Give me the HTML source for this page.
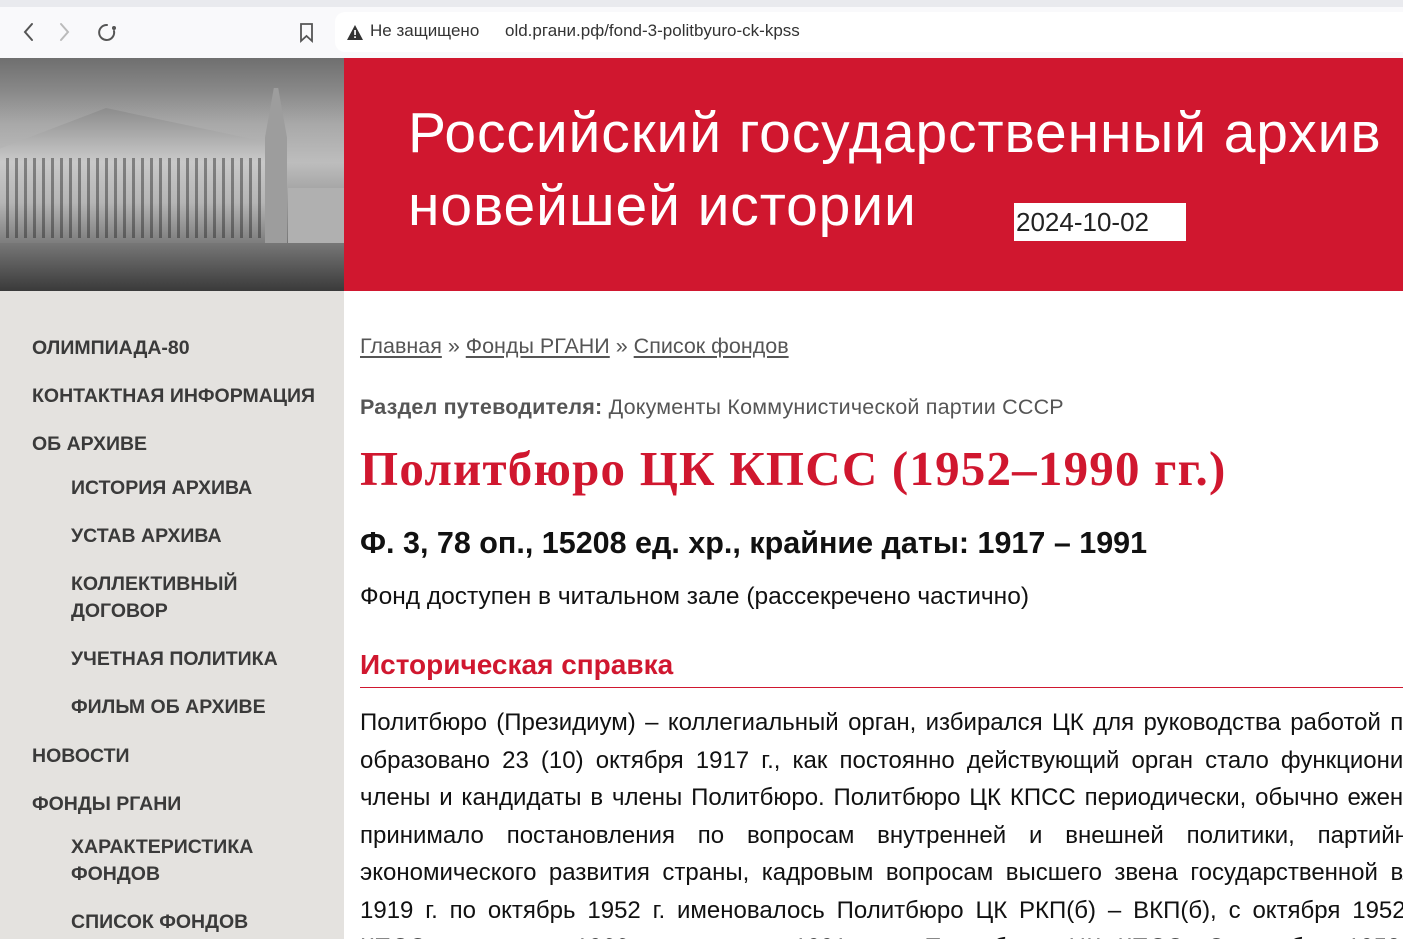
<!DOCTYPE html>
<html><head><meta charset="utf-8"><style>
*{margin:0;padding:0;box-sizing:border-box}
html,body{width:1403px;height:939px;overflow:hidden}
body{position:relative;background:#fff;font-family:"Liberation Sans",sans-serif}
.top{position:absolute;left:0;top:0;width:1403px;height:7px;background:#e9eaee}
.bar{position:absolute;left:0;top:7px;width:1403px;height:51px;background:#f9f9fb}
.addr{position:absolute;left:335px;top:12px;width:1100px;height:40px;background:#fff;border-radius:10px}
.url{position:absolute;top:21px;font-size:17px;color:#333;white-space:nowrap}
.photo{position:absolute;left:0;top:58px;width:344px;height:233px;overflow:hidden;
background:linear-gradient(180deg,#6f6f6f 0%,#8a8a8a 15%,#a8a8a8 28%,#bdbdbd 45%,#8a8a8a 70%,#7a7a7a 78%,#5b5b5b 86%,#333 100%)}
.red{position:absolute;left:344px;top:58px;width:1059px;height:233px;background:#d0172f}
.h1{position:absolute;left:408px;color:#fff;font-size:57px;white-space:nowrap;letter-spacing:0.9px}
.date{position:absolute;left:1014px;top:203px;width:172px;height:38px;background:#fff;color:#222;font-size:26px;padding-left:2px;line-height:38px}
.side{position:absolute;left:0;top:291px;width:344px;height:648px;background:#e4e2df}
.nav{position:absolute;font-weight:bold;font-size:19.5px;color:#3a3a3a;white-space:nowrap;line-height:27px}
.c{position:absolute;left:360px;white-space:nowrap}
.bc{font-size:21.5px;color:#555}
.bc u{text-decoration:underline;text-underline-offset:3px}
.body{position:absolute;left:360px;width:1070px;font-size:24px;color:#111;line-height:37.5px}
.body div{text-align:justify;text-align-last:justify;white-space:nowrap;height:37.5px}
</style></head><body>
<div class="top"></div><div class="bar"></div>
<svg style="position:absolute;left:18px;top:20px" width="110" height="24" viewBox="0 0 110 24" fill="none" stroke-width="2" stroke-linecap="round">
<path d="M14 4 L7 12 L14 20" stroke="#555"/>
<path d="M43 4 L50 12 L43 20" stroke="#bbb"/>
<path d="M89 5 A7.5 7.5 0 1 0 96 11" stroke="#555"/>
<circle cx="96" cy="8" r="2" fill="#555" stroke="none"/>
</svg>
<svg style="position:absolute;left:298px;top:22px" width="18" height="22" viewBox="0 0 18 22"><path d="M3 2 H14 V19 L8.5 14 L3 19 Z" fill="none" stroke="#555" stroke-width="1.8"/></svg>
<div class="addr"></div>
<svg style="position:absolute;left:346px;top:24px" width="18" height="17" viewBox="0 0 18 17"><path d="M9 1 L17 16 H1 Z" fill="#333"/><rect x="8.2" y="6" width="1.7" height="5" fill="#fff"/><rect x="8.2" y="12.3" width="1.7" height="1.7" fill="#fff"/></svg>
<div class="url" style="left:370px">Не защищено</div>
<div class="url" style="left:505px">old.ргани.рф/fond-3-politbyuro-ck-kpss</div>

<div class="photo">
<div style="position:absolute;left:0;top:50px;width:265px;height:135px;background:linear-gradient(180deg,#8c8c8c,#c9c9c9 40%,#b5b5b5 70%,#7d7d7d);clip-path:polygon(0 30%,40% 0,100% 25%,100% 100%,0 100%)"></div>
<div style="position:absolute;left:0;top:100px;width:265px;height:80px;background:repeating-linear-gradient(90deg,transparent 0 6px,rgba(40,40,40,.45) 6px 9px)"></div>
<div style="position:absolute;left:265px;top:30px;width:22px;height:165px;background:#9d9d9d;clip-path:polygon(40% 0,60% 0,100% 30%,100% 100%,0 100%,0 30%)"></div>
<div style="position:absolute;left:288px;top:130px;width:56px;height:60px;background:#b0b0b0"></div>
<div style="position:absolute;left:0;top:185px;width:344px;height:48px;background:linear-gradient(180deg,#777,#3a3a3a)"></div>
</div>
<div class="red"></div>
<div class="h1" style="top:100px">Российский государственный архив</div>
<div class="h1" style="top:173px">новейшей истории</div>
<div class="date">2024-10-02</div>

<div class="side"></div>
<div class="nav" style="left:32px;top:335px">ОЛИМПИАДА-80</div>
<div class="nav" style="left:32px;top:383px">КОНТАКТНАЯ ИНФОРМАЦИЯ</div>
<div class="nav" style="left:32px;top:431px">ОБ АРХИВЕ</div>
<div class="nav" style="left:71px;top:475px">ИСТОРИЯ АРХИВА</div>
<div class="nav" style="left:71px;top:523px">УСТАВ АРХИВА</div>
<div class="nav" style="left:71px;top:571px">КОЛЛЕКТИВНЫЙ<br>ДОГОВОР</div>
<div class="nav" style="left:71px;top:646px">УЧЕТНАЯ ПОЛИТИКА</div>
<div class="nav" style="left:71px;top:694px">ФИЛЬМ ОБ АРХИВЕ</div>
<div class="nav" style="left:32px;top:743px">НОВОСТИ</div>
<div class="nav" style="left:32px;top:791px">ФОНДЫ РГАНИ</div>
<div class="nav" style="left:71px;top:834px">ХАРАКТЕРИСТИКА<br>ФОНДОВ</div>
<div class="nav" style="left:71px;top:909px">СПИСОК ФОНДОВ</div>

<div class="c bc" style="top:334px"><u>Главная</u> » <u>Фонды РГАНИ</u> » <u>Список фондов</u></div>
<div class="c" style="top:395px;font-size:21.5px;letter-spacing:0.2px;color:#555"><b>Раздел путеводителя:</b> Документы Коммунистической партии СССР</div>
<div class="c" style="top:440px;font-family:'Liberation Serif',serif;font-weight:bold;font-size:49px;letter-spacing:1.2px;color:#d0172f">Политбюро ЦК КПСС (1952–1990 гг.)</div>
<div class="c" style="top:526px;font-size:30.5px;font-weight:bold;color:#111">Ф. 3, 78 оп., 15208 ед. хр., крайние даты: 1917 – 1991</div>
<div class="c" style="top:583px;font-size:24.5px;color:#111">Фонд доступен в читальном зале (рассекречено частично)</div>
<div class="c" style="top:649px;font-size:28px;font-weight:bold;color:#d0172f">Историческая справка</div>
<div style="position:absolute;left:360px;top:687px;width:1043px;height:1px;background:#d0172f"></div>
<div class="body" style="top:704px">
<div>Политбюро (Президиум) – коллегиальный орган, избирался ЦК для руководства работой пар</div>
<div>образовано 23 (10) октября 1917 г., как постоянно действующий орган стало функциониро</div>
<div>члены и кандидаты в члены Политбюро. Политбюро ЦК КПСС периодически, обычно еженед</div>
<div>принимало постановления по вопросам внутренней и внешней политики, партийног</div>
<div>экономического развития страны, кадровым вопросам высшего звена государственной вла</div>
<div>1919 г. по октябрь 1952 г. именовалось Политбюро ЦК РКП(б) – ВКП(б), с октября 1952 г.</div>
<div>КПСС, с апреля 1966 г. по июль 1991 г. – Политбюро ЦК КПСС. С октября 1952 г.</div>
</div>
</body></html>
